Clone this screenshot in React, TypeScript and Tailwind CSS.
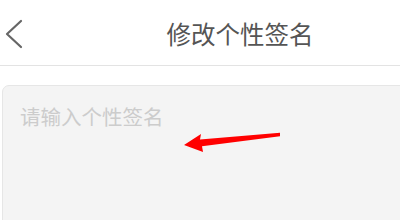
import React from 'react';

const font = { fontFamily: '"Noto Sans CJK SC", "Noto Sans", sans-serif' };

const BackIcon: React.FC = () => (
    <svg width="20" height="30" viewBox="0 0 20 30" fill="none">
        <polyline points="17,2 3,15 17,28" stroke="#666" strokeWidth="2.2" strokeLinecap="round" strokeLinejoin="round" />
    </svg>
);

const App: React.FC = () => {
    return (
        <div className="w-full h-[220px] overflow-hidden bg-white" style={font}>
            <div className="w-[480px]">
                <header className="h-[66px] flex items-center relative border-b border-[#e3e3e3]">
                    <button className="pl-[4px] pt-[3px] flex items-center" aria-label="返回">
                        <BackIcon />
                    </button>
                    <h1 className="absolute inset-0 flex items-center justify-center pt-[3px] text-[24.5px] leading-none text-[#555] pointer-events-none">
                        修改个性签名
                    </h1>
                </header>
                <div className="pt-[19px] px-[2px] relative">
                    <textarea
                        className="w-full h-[200px] resize-none rounded-[7px] border border-[#e6e6e6] bg-[#f4f4f4] pt-[18px] pl-[17px] pr-[18px] text-[20.5px] leading-[25px] text-[#333] placeholder:text-[#cccccc] outline-none"
                        placeholder="请输入个性签名"
                        style={font}
                    />
                    <svg className="absolute left-0 top-0 pointer-events-none" width="480" height="200" viewBox="0 66 480 200">
                        <polygon
                            points="184,145 201,134 200,139.5 280,132.8 280,136.2 202,146.2 203,152"
                            fill="#ff0000"
                        />
                    </svg>
                </div>
            </div>
        </div>
    );
};

export default App;
